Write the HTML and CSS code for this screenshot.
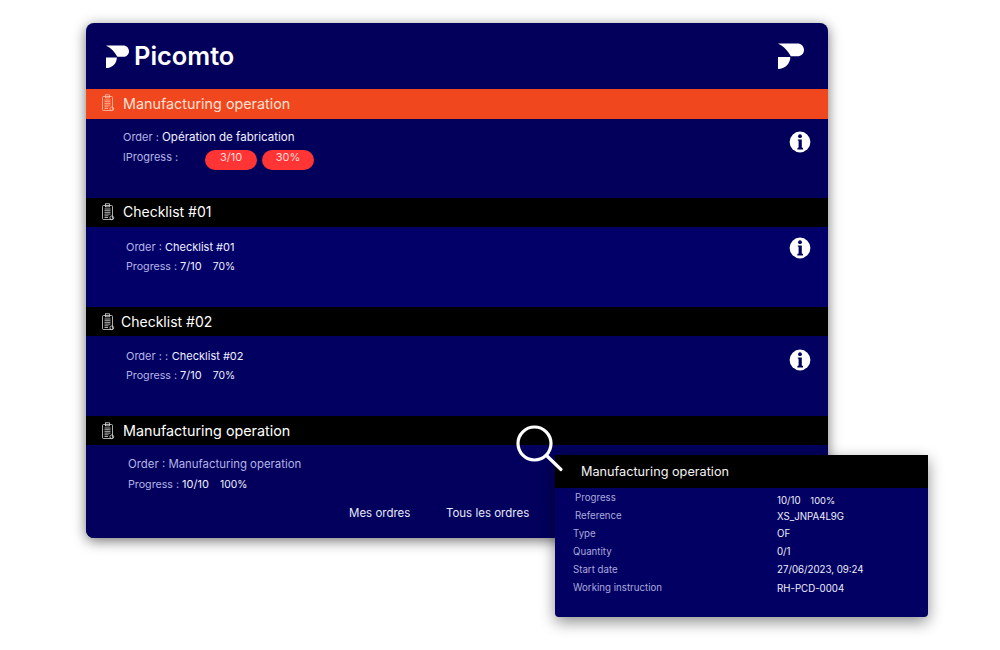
FILE: index.html
```html
<!DOCTYPE html>
<html lang="en">
<head>
<meta charset="utf-8">
<title>Picomto</title>
<link rel="stylesheet" href="styles.css">
</head>
<body>
<svg class="defs" width="0" height="0" aria-hidden="true">
  <defs>
    <symbol id="logo" viewBox="0 0 26 26">
      <path d="M0 0.5H19.5C23 0.5 26 3.2 26 7C26 10.8 23 13.3 19.5 13.3H12.8C10.5 8.5 6 3.5 0 0.5Z"/>
      <path d="M0 14H12.3C12.3 20.5 7 26 0 26Z"/>
    </symbol>
    <symbol id="clip" viewBox="0 0 14 18">
      <g fill="none" stroke="currentColor" stroke-width=".8">
        <rect x="1.5" y="2.5" width="10" height="14" rx="1"/>
        <rect x="4.5" y="0.8" width="4" height="3"/>
        <path d="M3.5 6H9.5M3.5 7.7H9.5M3.5 9.4H9.5M3.5 11.1H9.5M3.5 12.8H7.5M3.5 14.5H7"/>
        <circle cx="10.8" cy="14.8" r="1.9"/>
      </g>
    </symbol>
    <symbol id="info" viewBox="0 0 22 22">
      <circle cx="11" cy="11" r="10.4" fill="#fff"/>
      <circle cx="11" cy="5.2" r="1.9" fill="#02005c"/>
      <path d="M8.8 8.4H12.8V16.4L14 17V18.4H8.4V17L9.6 16.4V9.8L8.8 9.6Z" fill="#02005c"/>
    </symbol>
  </defs>
</svg>

<main class="card">
  <header class="brand">
    <div class="brand-name">
      <svg class="logo-small"><use href="#logo"/></svg>
      <span class="wordmark">Picomto</span>
    </div>
    <svg class="logo-large"><use href="#logo"/></svg>
  </header>

  <div class="bar bar-active">
    <svg class="clip"><use href="#clip"/></svg>
    <span class="bar-long">Manufacturing operation</span>
  </div>
  <section class="panel panel-first">
    <div class="lines">
      <p class="line"><span class="label">Order : </span><span class="value-long">Opération de fabrication</span></p>
      <p class="line line-progress"><span class="label label-wide">lProgress :</span><span class="pill">3/10</span><span class="pill">30%</span></p>
    </div>
    <svg class="info info-first"><use href="#info"/></svg>
  </section>

  <div class="bar bar-raised">
    <svg class="clip"><use href="#clip"/></svg>
    <span>Checklist #01</span>
  </div>
  <section class="panel panel-second">
    <div class="lines">
      <p class="line"><span class="label">Order : </span>Checklist #01</p>
      <p class="line"><span class="label label-small">Progress : </span>7/10 <span class="gap">70%</span></p>
    </div>
    <svg class="info"><use href="#info"/></svg>
  </section>

  <div class="bar bar-tight">
    <svg class="clip"><use href="#clip"/></svg>
    <span>Checklist #02</span>
  </div>
  <section class="panel panel-third">
    <div class="lines">
      <p class="line"><span class="label">Order : : </span><span class="value-third">Checklist #02</span></p>
      <p class="line"><span class="label label-small">Progress : </span>7/10 <span class="gap">70%</span></p>
    </div>
    <svg class="info info-third"><use href="#info"/></svg>
  </section>

  <div class="bar">
    <svg class="clip"><use href="#clip"/></svg>
    <span class="bar-long">Manufacturing operation</span>
  </div>
  <section class="panel panel-last">
    <div class="lines lines-wide">
      <p class="line"><span class="label value-last">Order : Manufacturing operation</span></p>
      <p class="line"><span class="label label-small">Progress : </span>10/10 <span class="gap">100%</span></p>
    </div>
    <nav class="tabs">
      <span>Mes ordres</span>
      <span>Tous les ordres</span>
    </nav>
  </section>
</main>

<svg class="magnifier" viewBox="0 0 48 48">
  <circle cx="18.5" cy="18.5" r="16.5" fill="none" stroke="#fff" stroke-width="3.2"/>
  <path d="M31 31L45 44.5" fill="none" stroke="#fff" stroke-width="3.2" stroke-linecap="round"/>
</svg>

<aside class="popup">
  <div class="popup-title">Manufacturing operation</div>
  <dl class="facts">
    <div class="fact fact-inset"><dt>Progress</dt><dd class="drop-3">10/10 <span class="gap-small">100%</span></dd></div>
    <div class="fact fact-inset"><dt>Reference</dt><dd class="drop-1">XS_JNPA4L9G</dd></div>
    <div class="fact"><dt>Type</dt><dd>OF</dd></div>
    <div class="fact"><dt>Quantity</dt><dd>0/1</dd></div>
    <div class="fact"><dt>Start date</dt><dd>27/06/2023, 09:24</dd></div>
    <div class="fact"><dt>Working instruction</dt><dd class="drop-1">RH-PCD-0004</dd></div>
  </dl>
</aside>
</body>
</html>
```
FILE: styles.css
```css
* { box-sizing: border-box; }
html, body { margin: 0; height: 100%; }
body {
  width: 1000px;
  height: 650px;
  background: #fff;
  position: relative;
  overflow: hidden;
  padding: 23px 0 0 86px;
  font-family: Inter, "Noto Sans", sans-serif;
  color: #fff;
}
.defs { position: absolute; }
p, dl, dd { margin: 0; }

.card {
  width: 742px;
  height: 515px;
  background: #02005a;
  border-radius: 8px;
  box-shadow: 0 3px 13px rgba(0, 0, 0, .55);
  display: flex;
  flex-direction: column;
  overflow: hidden;
}
.brand {
  height: 66px;
  flex: none;
  padding: 0 24px 0 20px;
  display: flex;
  align-items: center;
  justify-content: space-between;
}
.brand-name { display: flex; align-items: center; gap: 5px; }
.logo-small { width: 23px; height: 23px; fill: #fff; }
.logo-large { width: 26px; height: 26px; fill: #fff; }
.wordmark { font-size: 25.4px; font-weight: 600; line-height: 1; }

.bar {
  height: 29px;
  flex: none;
  background: #000;
  display: flex;
  align-items: center;
  gap: 8px;
  padding-left: 15px;
  font-size: 14px;
}
.bar-active { height: 30px; padding-bottom: 2px; background: #f0471f; color: #ffe0d2; }
.bar-active .clip { color: #ffc4aa; }
.bar-raised { padding-bottom: 2px; }
.bar-tight { gap: 6px; }
.bar-long { font-size: 14.35px; }
.clip { width: 14px; height: 18px; flex: none; color: #d8d8d8; }

.panel {
  height: 80px;
  flex: none;
  display: flex;
  justify-content: space-between;
  align-items: flex-start;
  padding-right: 17px;
  position: relative;
}
.panel-first { height: 79px; padding-left: 37px; padding-top: 10px; background: #02005a; }
.panel-second { padding-left: 40px; padding-top: 12px; background: #020068; }
.panel-third { padding-left: 40px; padding-top: 12px; background: #020060; }
.panel-last { flex: 1; height: auto; padding-left: 42px; padding-top: 11px; background: #02005c; }

.lines { display: flex; flex-direction: column; gap: 3px; }
.panel-first .lines, .lines-wide { gap: 4px; }
.line { font-size: 11px; line-height: 16px; color: #f0f0ff; white-space: pre-wrap; }
.label { color: #b4b4e6; }
.label-small { font-size: 10.7px; }
.value-long { font-size: 11.55px; }
.value-last { font-size: 11.4px; }
.value-third { margin-left: 0.5px; }
.label-wide { display: inline-block; width: 77px; }
.line-progress { display: flex; align-items: flex-start; gap: 5px; }
.pill {
  width: 52px;
  height: 20px;
  margin-top: 1px;
  background: #ff3535;
  border-radius: 10px;
  text-align: center;
  line-height: 15px;
  color: #ffd9d6;
}
.gap { margin-left: 8px; font-size: 10.3px; }
.info { width: 22px; height: 22px; margin-top: -2px; }
.info-first { margin-top: 2px; }
.info-third { margin-top: 1px; }

.tabs {
  position: absolute;
  left: 263px;
  top: 60px;
  display: flex;
  gap: 35.5px;
  font-size: 11.5px;
  line-height: 16px;
  color: #e8e8fa;
}

.magnifier {
  position: absolute;
  left: 516px;
  top: 425px;
  width: 48px;
  height: 48px;
  z-index: 2;
}
.popup {
  position: absolute;
  left: 555px;
  top: 455px;
  width: 373px;
  height: 162px;
  background: #020062;
  border-radius: 0 0 4px 4px;
  box-shadow: 0 5px 15px rgba(0, 0, 0, .45);
}
.popup-title {
  height: 33px;
  background: #000;
  padding-left: 26px;
  font-size: 12.7px;
  line-height: 34px;
  color: #f2f2f2;
}
.facts {
  display: flex;
  flex-direction: column;
  padding: 1px 0 0 18px;
  font-size: 9.7px;
  line-height: 18px;
}
.fact { display: flex; height: 18px; }
.fact-inset { padding-left: 2px; }
.fact-inset dd { margin-left: -2px; }
.fact dt { width: 204px; color: #aaaadd; }
.fact dd { color: #eeeefa; }
.fact .drop-3 { margin-top: 3px; }
.fact .drop-1 { margin-top: 1px; }
.gap-small { margin-left: 7px; font-size: 9.4px; }
```
